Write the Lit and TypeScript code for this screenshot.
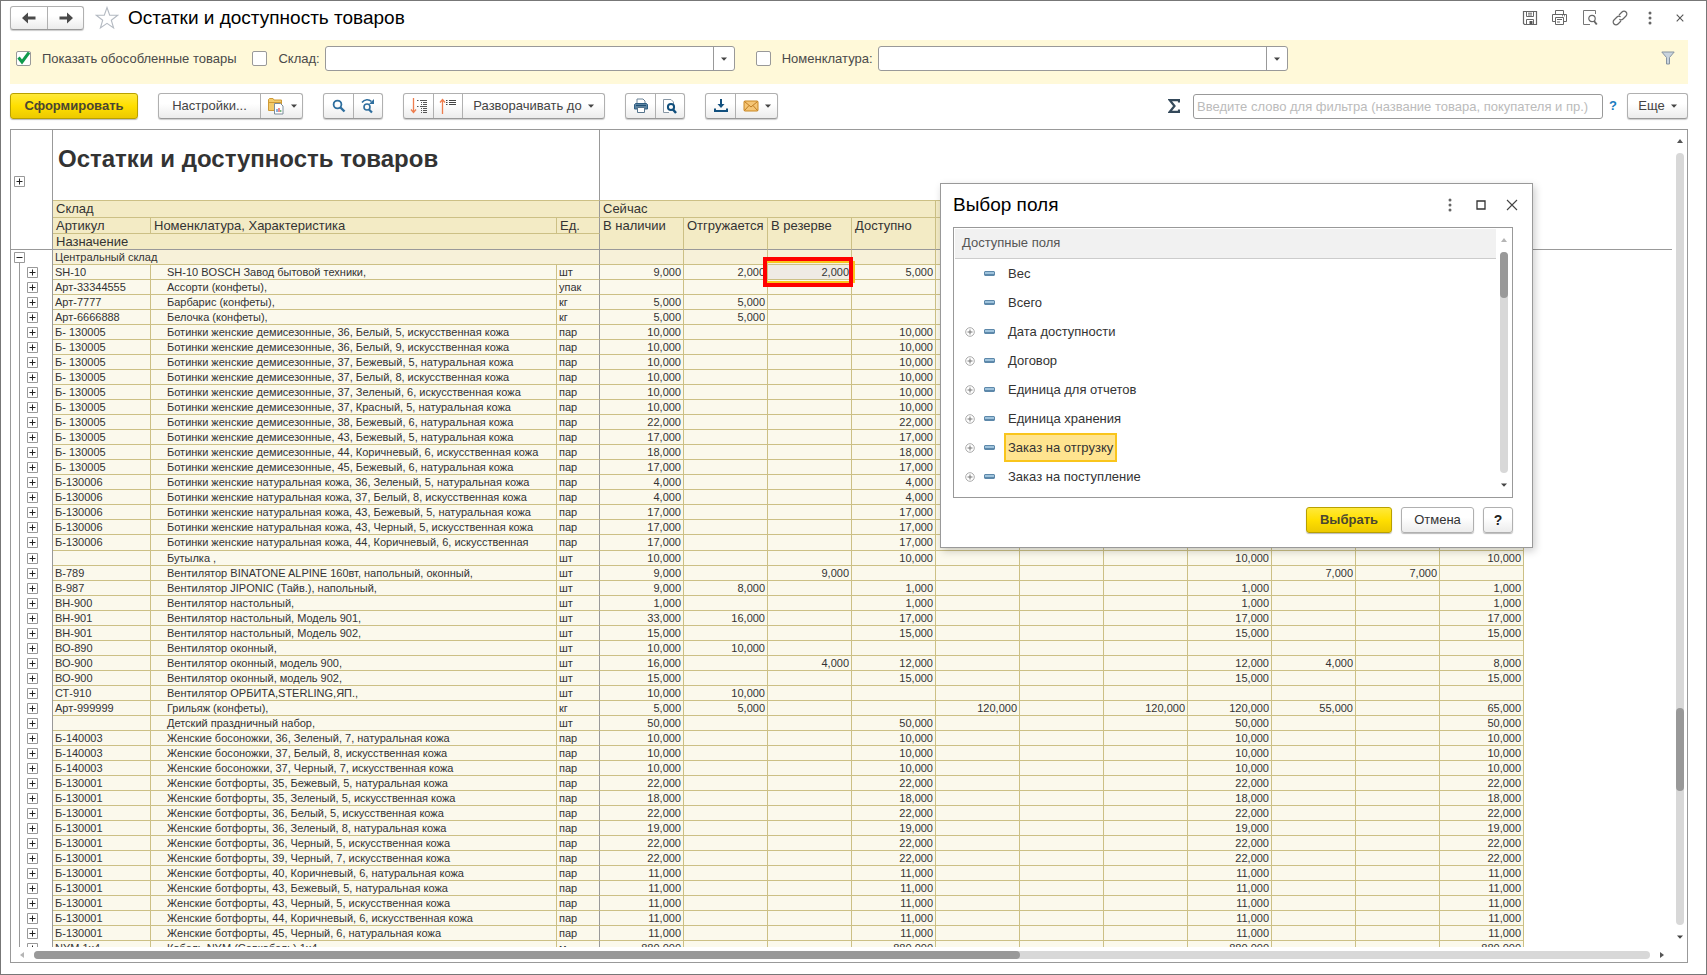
import { LitElement, html, svg, css } from "lit";
import { customElement } from "lit/decorators.js";
import { classMap } from "lit/directives/class-map.js";

type Row = { code: string; name: string; unit: string; v: string[]; tall?: boolean };

// Values are listed per column; a lone number means it is in stock and fully available.
const full = (n: string) => [n, "", "", n, "", "", "", n, "", "", n];
const r = (code: string, name: string, unit: string, v: string | string[], tall = false): Row => ({
  code, name, unit, v: typeof v === "string" ? full(v) : v, tall,
});
const D = "Ботинки женские демисезонные, ";
const N = "Ботинки женские натуральная кожа, ";
const F = "Женские ботфорты, ";
const IK = ", искусственная кожа";
const NK = ", натуральная кожа";

const ROWS: Row[] = [
  r("SH-10", "SH-10 BOSCH Завод бытовой техники,", "шт", ["9,000", "2,000", "2,000", "5,000", "", "", "", "5,000", "", "", "5,000"]),
  r("Арт-33344555", "Ассорти (конфеты),", "упак", []),
  r("Арт-7777", "Барбарис (конфеты),", "кг", ["5,000", "5,000"]),
  r("Арт-6666888", "Белочка (конфеты),", "кг", ["5,000", "5,000"]),
  r("Б- 130005", D + "36, Белый, 5" + IK, "пар", "10,000"),
  r("Б- 130005", D + "36, Белый, 9" + IK, "пар", "10,000"),
  r("Б- 130005", D + "37, Бежевый, 5" + NK, "пар", "10,000"),
  r("Б- 130005", D + "37, Белый, 8" + IK, "пар", "10,000"),
  r("Б- 130005", D + "37, Зеленый, 6" + IK, "пар", "10,000"),
  r("Б- 130005", D + "37, Красный, 5" + NK, "пар", "10,000"),
  r("Б- 130005", D + "38, Бежевый, 6" + NK, "пар", "22,000"),
  r("Б- 130005", D + "43, Бежевый, 5" + NK, "пар", "17,000"),
  r("Б- 130005", D + "44, Коричневый, 6" + IK, "пар", "18,000"),
  r("Б- 130005", D + "45, Бежевый, 6" + NK, "пар", "17,000"),
  r("Б-130006", N + "36, Зеленый, 5" + NK, "пар", "4,000"),
  r("Б-130006", N + "37, Белый, 8" + IK, "пар", "4,000"),
  r("Б-130006", N + "43, Бежевый, 5" + NK, "пар", "17,000"),
  r("Б-130006", N + "43, Черный, 5" + IK, "пар", "17,000"),
  r("Б-130006", N + "44, Коричневый, 6, искусственная", "пар", "17,000", true),
  r("", "Бутылка ,", "шт", "10,000"),
  r("В-789", "Вентилятор BINATONE ALPINE 160вт, напольный, оконный,", "шт", ["9,000", "", "9,000", "", "", "", "", "", "7,000", "7,000"]),
  r("В-987", "Вентилятор JIPONIC (Тайв.), напольный,", "шт", ["9,000", "8,000", "", "1,000", "", "", "", "1,000", "", "", "1,000"]),
  r("ВН-900", "Вентилятор настольный,", "шт", "1,000"),
  r("ВН-901", "Вентилятор настольный, Модель 901,", "шт", ["33,000", "16,000", "", "17,000", "", "", "", "17,000", "", "", "17,000"]),
  r("ВН-901", "Вентилятор настольный, Модель 902,", "шт", "15,000"),
  r("ВО-890", "Вентилятор оконный,", "шт", ["10,000", "10,000"]),
  r("ВО-900", "Вентилятор оконный, модель 900,", "шт", ["16,000", "", "4,000", "12,000", "", "", "", "12,000", "4,000", "", "8,000"]),
  r("ВО-900", "Вентилятор оконный, модель 902,", "шт", "15,000"),
  r("СТ-910", "Вентилятор ОРБИТА,STERLING,ЯП.,", "шт", ["10,000", "10,000"]),
  r("Арт-999999", "Грильяж (конфеты),", "кг", ["5,000", "5,000", "", "", "120,000", "", "120,000", "120,000", "55,000", "", "65,000"]),
  r("", "Детский праздничный набор,", "шт", "50,000"),
  r("Б-140003", "Женские босоножки, 36, Зеленый, 7" + NK, "пар", "10,000"),
  r("Б-140003", "Женские босоножки, 37, Белый, 8" + IK, "пар", "10,000"),
  r("Б-140003", "Женские босоножки, 37, Черный, 7" + IK, "пар", "10,000"),
  r("Б-130001", F + "35, Бежевый, 5" + NK, "пар", "22,000"),
  r("Б-130001", F + "35, Зеленый, 5" + IK, "пар", "18,000"),
  r("Б-130001", F + "36, Белый, 5" + IK, "пар", "22,000"),
  r("Б-130001", F + "36, Зеленый, 8" + NK, "пар", "19,000"),
  r("Б-130001", F + "36, Черный, 5" + IK, "пар", "22,000"),
  r("Б-130001", F + "39, Черный, 7" + IK, "пар", "22,000"),
  r("Б-130001", F + "40, Коричневый, 6" + NK, "пар", "11,000"),
  r("Б-130001", F + "43, Бежевый, 5" + NK, "пар", "11,000"),
  r("Б-130001", F + "43, Черный, 5" + IK, "пар", "11,000"),
  r("Б-130001", F + "44, Коричневый, 6" + IK, "пар", "11,000"),
  r("Б-130001", F + "45, Черный, 6" + NK, "пар", "11,000"),
  r("NYM 1x4", "Кабель NYM (Севкабель) 1x4", "м", "880,000"),
];

const FIELDS: [string, boolean][] = [
  ["Вес", false], ["Всего", false], ["Дата доступности", true], ["Договор", true],
  ["Единица для отчетов", true], ["Единица хранения", true], ["Заказ на отгрузку", true], ["Заказ на поступление", true],
];

const COLS = [0, 1, 2, 3, 4, 5, 6, 7, 8, 9, 10];

const icon = (w: number, h: number, body: unknown) =>
  html`<svg width=${w} height=${h} viewBox="0 0 ${w} ${h}" fill="none" aria-hidden="true">${body}</svg>`;

const I = {
  back: icon(16, 14, svg`<path d="M1 7l6-5.500v4h7.500v3H7v4z" fill="#4a4a4a"/>`),
  fwd: icon(16, 14, svg`<path d="M15 7L9 1.500v4H1.500v3H9v4z" fill="#4a4a4a"/>`),
  star: icon(24, 24, svg`<path d="M12 1.500l2.700 7.600 8 .2-6.400 4.900 2.300 7.800-6.600-4.600L5.400 22l2.300-7.800L1.300 9.300l8-.2z" stroke="#b4bac2" stroke-width="1.100" fill="#fff"/>`),
  save: icon(16, 16, svg`<path d="M1.500 1.500h13v13h-12l-1-1z" stroke="#666" stroke-width="1.200"/><path d="M4.500 1.500v5h7v-5M6 3.200h4M6 5h4M4.500 14v-4.500h7V14" stroke="#666"/><path d="M7.500 11h3v3h-3z" fill="#555"/>`),
  print: icon(18, 16, svg`<path d="M4.500 4.500v-4h8v4M4.500 11.500h-3v-7h14v7h-3M4.500 7.500h8v7h-8zM6 9.500h5M6 12h3M11 5.800h1M13 5.800h1" stroke="#666"/>`),
  preview: icon(16, 16, svg`<path d="M8 14.500H1.500V.5h12V4" stroke="#777"/><circle cx="10" cy="8.500" r="3.200" stroke="#666" stroke-width="1.200"/><path d="M12 11l2.800 3.500" stroke="#666" stroke-width="2"/>`),
  link: icon(16, 16, svg`<path d="M7 5l3-3a2.700 2.700 0 014 4l-3 3a2.700 2.700 0 01-3.600.2M9 11l-3 3a2.700 2.700 0 01-4-4l3-3a2.700 2.700 0 013.600-.2" stroke="#666" stroke-width="1.200"/>`),
  dots: icon(4, 14, svg`<circle cx="2" cy="2" r="1.500" fill="#666"/><circle cx="2" cy="7" r="1.500" fill="#666"/><circle cx="2" cy="12" r="1.500" fill="#666"/>`),
  close: icon(8, 8, svg`<path d="M.7.7l6.600 6.600M7.300.7L.7 7.300" stroke="#555" stroke-width="1.100"/>`),
  closeBig: icon(12, 12, svg`<path d="M1 1l10 10M11 1L1 11" stroke="#444" stroke-width="1.100"/>`),
  max: icon(10, 10, svg`<path d="M1 1h8v8H1z" stroke="#333" stroke-width="1.300"/>`),
  caret: icon(6, 4, svg`<path d="M0 .5h6L3 3.800z" fill="#444"/>`),
  up: icon(6, 4, svg`<path d="M0 4h6L3 0z" fill="#555"/>`),
  upDim: icon(6, 4, svg`<path d="M0 4h6L3 0z" fill="#b5b5b5"/>`),
  left: icon(4, 6, svg`<path d="M4 0v6L0 3z" fill="#b5b5b5"/>`),
  right: icon(4, 6, svg`<path d="M0 0v6l4-3z" fill="#555"/>`),
  funnel: icon(14, 14, svg`<path d="M.8 1h12.400L8.500 6.500V13h-3V6.500z" fill="#c9d4de" stroke="#8794a0"/>`),
  folder: icon(18, 18, svg`<path d="M1.500 13.500v-11l1-1H6l1 1.500h7.500v10.500z" fill="#f3cb6b" stroke="#cf9a35"/><path d="M2 5.500h12" stroke="#cf9a35"/><path d="M7.500 6.500h6l2.500 2.500v8H7.500z" fill="#fff" stroke="#7c8c9b"/><path d="M10 15v-3" stroke="#3b7dc4" stroke-width="1.200"/><path d="M12 15v-4" stroke="#d44" stroke-width="1.200"/><path d="M13.800 15v-2" stroke="#3a9b4a"/>`),
  find: icon(14, 14, svg`<circle cx="5.500" cy="5.500" r="3.900" stroke="#2e6e9e" stroke-width="1.800"/><path d="M8.500 8.500l4 4" stroke="#2e6e9e" stroke-width="2.400"/>`),
  findNext: icon(16, 16, svg`<circle cx="7" cy="9" r="3" stroke="#2e6e9e" stroke-width="1.600"/><path d="M9 11.500l3 3" stroke="#2e6e9e" stroke-width="2.200"/><path d="M2 4.500C4.500 1 9 1 11.500 3.500" stroke="#2e6e9e" stroke-width="1.600"/><path d="M9 6h5V1z" fill="#2e6e9e"/>`),
  sortDown: icon(18, 16, svg`<path d="M3.500 0v14M1 11.500l2.500 3 2.500-3" stroke="#ee7d4e" stroke-width="1.300"/><path d="M7 2.500h1.500M10 2.500h7M11 4.500h1M13 4.500h4M11 6.500h1M13 6.500h4M7 8.500h1.500M10 8.500h7M11 10.500h1M13 10.500h4M11 12.500h1M13 12.500h4M11 14.500h1M13 14.500h4" stroke="#555"/>`),
  sortUp: icon(18, 16, svg`<path d="M3.500 16V1.500M1 4.500l2.500-3 2.500 3" stroke="#ee7d4e" stroke-width="1.300"/><path d="M7 2.500h1.500M7 4.500h1.500M7 6.500h1.500M10 2.500h7M10 4.500h7M10 6.500h7" stroke="#444"/>`),
  printBlue: icon(16, 16, svg`<path d="M4 5V1h6l2 2v2" fill="#fff" stroke="#6a8296"/><path d="M2.500 5.500h11l1 1V11h-13V6.500z" fill="#5c83a1" stroke="#2f5f84"/><path d="M3 7.500h10" stroke="#1f4f74"/><path d="M4.500 9.500h7v5h-7z" fill="#fff" stroke="#56748c"/>`),
  previewBlue: icon(16, 16, svg`<path d="M7 14.500H1.500v-13H9L11.500 4v2" stroke="#8797a5" fill="#fff"/><circle cx="9" cy="9" r="3.100" stroke="#0f4e7c" stroke-width="2"/><path d="M11 11.500l3 3.500" stroke="#0f4e7c" stroke-width="2.500"/>`),
  download: icon(16, 16, svg`<path d="M8 1v6" stroke="#12507e" stroke-width="2"/><path d="M4.500 6h7L8 10z" fill="#12507e"/><path d="M2 10.500v2.500h12v-2.500" stroke="#12507e" stroke-width="2"/>`),
  mail: icon(16, 12, svg`<rect x="1" y="1" width="14" height="10" rx="1" fill="#f5c575" stroke="#c98722"/><path d="M1.500 1.500L8 7l6.500-5.500M1.500 10.500l4.500-5M14.500 10.500l-4.500-5" stroke="#b8741a" stroke-width=".9"/>`),
  sigma: icon(12, 14, svg`<path d="M11 3.500V1.200H1.800L6.500 7l-4.700 5.800H11v-2.300" stroke="#34495a" stroke-width="2.200"/>`),
  field: icon(11, 5, svg`<path d="M1 0h9l1 1v3l-1 1H1L0 4V1z" fill="#5d88aa"/><path d="M1 1h9v2H1z" fill="#9fc3dc"/>`),
  expand: icon(10, 10, svg`<circle cx="5" cy="5" r="4.300" stroke="#aaa" fill="#fff"/><path d="M5 2.500v5M2.500 5h5" stroke="#777"/>`),
  plus: icon(11, 11, svg`<path d="M.5.5h10v10H.5z" fill="#fff" stroke="#999"/><path d="M5.500 2.500v6M2.500 5.500h6" stroke="#222"/>`),
  minus: icon(11, 11, svg`<path d="M.5.5h10v10H.5z" fill="#fff" stroke="#999"/><path d="M2.500 5.500h6" stroke="#222"/>`),
};

@customElement("app-root")
export class AppRoot extends LitElement {
  static styles = css`
    :host {
      display: block;
      position: relative;
      height: 100vh;
      box-sizing: border-box;
      border: 1px solid #777;
      background: #fff;
      color: #333;
      font: 13px/16px "Liberation Sans", Arial, sans-serif;
      overflow: hidden;
    }
    *, *::before, *::after { box-sizing: border-box; }
    svg { display: block; flex: none; }
    button { font: inherit; color: inherit; margin: 0; padding: 0; border: 0; background: none; }
    .page { display: flex; flex-direction: column; height: 100%; padding: 0 18px 11px 9px; }
    .titlebar { display: flex; align-items: center; height: 39px; padding-bottom: 6px; flex: none; }
    .group { display: flex; border: 1px solid #b0b0b0; border-bottom-color: #999; border-radius: 3px; background: linear-gradient(#fff 40%, #ececec); box-shadow: 0 1px 1px #ccc; height: 26px; }
    .group.nav { height: 24px; }
    .group button { display: flex; align-items: center; justify-content: center; width: 29px; gap: 6px; }
    .group button + button { border-left: 1px solid #b0b0b0; }
    .group.nav button { width: 36px; }
    .group .settings { width: 101px; }
    .group .level { width: 142px; }
    .group .more { width: 59px; }
    .group .drop { width: 42px; }
    .star { margin: 0 9px 0 11px; }
    h1, h2 { margin: 0; font-size: 19px; line-height: 22px; font-weight: 400; color: #000; }
    .grow { flex: 1; }
    .tools { display: flex; align-items: center; }
    .tools button { display: flex; align-items: center; justify-content: center; width: 30px; height: 24px; }
    .titlebar .tools { margin-right: -7px; }
    .filters { display: flex; align-items: flex-start; height: 44px; padding: 6px 13px 0 6px; background: #fff9d9; flex: none; color: #4a4a4a; }
    .check { display: flex; align-items: center; height: 25px; gap: 11px; }
    .check input { appearance: none; width: 15px; height: 15px; margin: 0; border: 1px solid #999; border-radius: 2px; background: #fff; }
    .check input:checked { background: #fff url("data:image/svg+xml,%3Csvg xmlns='http://www.w3.org/2000/svg' viewBox='0 0 13 13'%3E%3Cpath d='M1.500 5.500l3.500 4.500L12 .5' fill='none' stroke='%23109a4c' stroke-width='3'/%3E%3C/svg%3E") center / 13px; }
    .check.second { margin-left: 16px; }
    .check.third { margin-left: 21px; }
    .combo { display: flex; width: 410px; height: 25px; margin-left: 5px; border: 1px solid #999; border-radius: 3px; background: #fff; }
    .combo input { flex: 1; min-width: 0; border: 0; padding: 0 4px; background: none; font: inherit; outline: 0; }
    .combo button { width: 21px; border-left: 1px solid #999; display: flex; align-items: center; justify-content: center; }
    .funnel { padding-top: 5px; }
    .toolbar { display: flex; align-items: center; height: 45px; padding-top: 1px; padding-bottom: 2px; gap: 20px; flex: none; color: #444; }
    .primary { height: 26px; border: 1px solid #b8a000; border-radius: 3px; background: linear-gradient(#ffe93a, #ffdf00 50%, #ecc900); color: #4a4632; font-weight: 700; box-shadow: 0 1px 1px #bbb; }
    .make { width: 128px; }
    .right { display: flex; align-items: center; }
    .search { width: 410px; height: 25px; margin: 0 6px 0 13px; padding: 0 3px; border: 1px solid #999; border-radius: 3px; font: inherit; background: #fff; }
    .search::placeholder { color: #bbb; opacity: 1; }
    .help { color: #1a7cc0; font-weight: 700; text-decoration: none; margin-right: 10px; }
    .sheet { flex: 1; min-height: 0; display: grid; grid-template: minmax(0, 1fr) 15px / minmax(0, 1fr) 15px; border: 1px solid #999; }
    .view { overflow: hidden; }
    .vbar { display: flex; flex-direction: column; align-items: center; padding: 9px 0 8px; gap: 10px; }
    .vbar .track, .hbar .track { flex: 1; background: #d8d8d8; border-radius: 4px; display: flex; }
    .vbar .track { width: 8px; flex-direction: column; }
    .thumb { background: #999; border-radius: 4px; }
    .vbar .thumb { height: 83px; margin-top: 555px; }
    .hbar { display: flex; align-items: center; padding: 0 8px 0 9px; gap: 10px; }
    .hbar .track { height: 8px; }
    .hbar .thumb { width: 61%; }
    table { border-collapse: separate; border-spacing: 0; table-layout: fixed; width: 100%; font-size: 11px; line-height: 14px; }
    th, td { padding: 0 2px; font-weight: 400; text-align: left; white-space: nowrap; overflow: hidden; border: 0 solid #ccc085; border-width: 0 1px 1px 0; vertical-align: top; height: 15px; }
    td { background: #fbf9ec; }
    td.num { text-align: right; }
    td.name { padding-left: 16px; }
    .side, td.side { background: #fff; border-right-color: #999; }
    td.side { border-bottom: 0; padding: 2px 0 0 16px; background: linear-gradient(#999, #999) 8px 0 / 1px 100% no-repeat #fff; }
    td.side.root { padding-left: 3px; background: linear-gradient(#999, #999) 8px 8px / 1px 100% no-repeat #fff; }
    th.side { padding: 46px 0 0 3px; border-bottom-color: #999; vertical-align: top; }
    .side button { display: block; }
    .freeze, td.freeze { border-right-color: #999; }
    th.title { height: 71px; padding: 14px 5px 0; font-size: 24px; line-height: 30px; font-weight: 700; border-right-color: #999; }
    th.blank { border-right: 0; }
    .head th { background: #f3ebc5; font-size: 13px; line-height: 14px; height: 16px; padding: 1px 0 0 3px; }
    .head.first th { height: 17px; }
    th.low { border-bottom-color: #999 !important; }
    .head th.rest, th.rest, td.rest { background: #fff; border: 0; }
    .head th.rest.line { border-bottom: 1px solid #999; }
    .total td:not(.side):not(.rest) { background: #f7f1d9; }
    .tall td { height: 16px; }
    td.mark { position: relative; overflow: visible; background: #efebe4; }
    td.mark::before { content: ""; position: absolute; inset: -4px -4px -4px -1px; border: 2px solid #f9c51c; border-left: 0; }
    td.mark::after { content: ""; position: absolute; inset: -8px -2px -8px -5px; border: 4px solid #f00; }
    .dialog { position: absolute; left: 939px; top: 182px; width: 593px; border: 1px solid #999; background: #fff; box-shadow: 2px 3px 8px rgba(0, 0, 0, .2); padding: 0 19px 14px 12px; }
    .dialog header { display: flex; align-items: center; height: 43px; padding-bottom: 2px; }
    .dialog .tools { gap: 1px; margin-right: -14px; }
    .list { display: flex; height: 271px; border: 1px solid #999; padding: 1px; }
    .fields { flex: 1; overflow: hidden; }
    .cap { height: 30px; padding: 6px 7px; background: #f1f1f1; color: #555; border-bottom: 1px solid #ccc; }
    ul { list-style: none; margin: 0; padding: 0; }
    li { display: flex; align-items: center; height: 29px; padding-left: 10px; gap: 9px; }
    li .slot { width: 10px; }
    li .label { height: 29px; line-height: 25px; padding: 0 2px; border: 2px solid transparent; }
    li .label.on { background: #ffe48f; border-color: #f9c51c; }
    .list .vbar { width: 15px; padding: 9px 0; }
    .list .vbar .thumb { height: 46px; margin: 0; }
    .actions { display: flex; justify-content: flex-end; gap: 9px; margin-top: 9px; }
    .ok { width: 86px; }
    .plain { height: 26px; border: 1px solid #b0b0b0; border-radius: 3px; background: linear-gradient(#fff 40%, #ececec); box-shadow: 0 1px 1px #bbb; }
    .cancel { width: 73px; }
    .q { width: 30px; font-weight: 700; font-size: 14px; color: #222; }
  `;

  private row(d: Row, i: number) {
    return html`<tr class=${classMap({ tall: !!d.tall })}>
      <td class="side"><button aria-label="Развернуть">${I.plus}</button></td>
      <td>${d.code}</td><td class="name">${d.name}</td><td class="freeze">${d.unit}</td>
      ${COLS.map((c) => html`<td class=${classMap({ num: true, mark: i === 0 && c === 2 })}>${d.v[c] ?? ""}</td>`)}
      <td class="rest"></td>
    </tr>`;
  }

  render() {
    return html`
      <div class="page">
        <div class="titlebar">
          <div class="group nav"><button aria-label="Назад">${I.back}</button><button aria-label="Вперед">${I.fwd}</button></div>
          <button class="star" aria-label="В избранное">${I.star}</button>
          <h1>Остатки и доступность товаров</h1>
          <span class="grow"></span>
          <div class="tools">
            <button aria-label="Сохранить">${I.save}</button><button aria-label="Печать">${I.print}</button>
            <button aria-label="Просмотр">${I.preview}</button><button aria-label="Ссылка">${I.link}</button>
            <button aria-label="Меню">${I.dots}</button><button aria-label="Закрыть">${I.close}</button>
          </div>
        </div>
        <div class="filters">
          <label class="check"><input type="checkbox" checked />Показать обособленные товары</label>
          <label class="check second"><input type="checkbox" />Склад:</label>
          <div class="combo"><input type="text" aria-label="Склад" /><button aria-label="Выбрать склад">${I.caret}</button></div>
          <label class="check third"><input type="checkbox" />Номенклатура:</label>
          <div class="combo"><input type="text" aria-label="Номенклатура" /><button aria-label="Выбрать номенклатуру">${I.caret}</button></div>
          <span class="grow"></span>
          <button class="funnel" aria-label="Отбор">${I.funnel}</button>
        </div>
        <div class="toolbar">
          <button class="primary make">Сформировать</button>
          <div class="group"><button class="settings">Настройки...</button><button class="drop" aria-label="Варианты">${I.folder}${I.caret}</button></div>
          <div class="group"><button aria-label="Найти">${I.find}</button><button aria-label="Найти далее">${I.findNext}</button></div>
          <div class="group"><button aria-label="Развернуть группы">${I.sortDown}</button><button aria-label="Свернуть группы">${I.sortUp}</button><button class="level">Разворачивать до ${I.caret}</button></div>
          <div class="group"><button aria-label="Печать">${I.printBlue}</button><button aria-label="Предварительный просмотр">${I.previewBlue}</button></div>
          <div class="group"><button aria-label="Сохранить в файл">${I.download}</button><button class="drop" aria-label="Отправить">${I.mail}${I.caret}</button></div>
          <span class="grow"></span>
          <div class="right">
            <button aria-label="Сумма">${I.sigma}</button>
            <input class="search" type="text" aria-label="Фильтр" placeholder="Введите слово для фильтра (название товара, покупателя и пр.)" />
            <a class="help" href="#">?</a>
            <div class="group"><button class="more">Еще ${I.caret}</button></div>
          </div>
        </div>
        <div class="sheet">
          <div class="view">
            <table>
              <colgroup>
                <col style="width:42px" /><col style="width:98px" /><col style="width:406px" /><col style="width:43px" />
                ${COLS.map(() => html`<col style="width:84px" />`)}<col />
              </colgroup>
              <thead>
                <tr>
                  <th class="side" rowspan="4"><button aria-label="Развернуть">${I.plus}</button></th>
                  <th class="title" colspan="3">Остатки и доступность товаров</th>
                  <th class="blank" colspan="11"></th><th class="rest"></th>
                </tr>
                <tr class="head first">
                  <th class="freeze" colspan="3">Склад</th><th colspan="4">Сейчас</th><th colspan="7"></th><th class="rest"></th>
                </tr>
                <tr class="head">
                  <th>Артикул</th><th>Номенклатура, Характеристика</th><th class="freeze">Ед.</th>
                  <th class="low" rowspan="2">В наличии</th><th class="low" rowspan="2">Отгружается</th>
                  <th class="low" rowspan="2">В резерве</th><th class="low" rowspan="2">Доступно</th>
                  ${COLS.slice(4).map(() => html`<th class="low" rowspan="2"></th>`)}<th class="rest"></th>
                </tr>
                <tr class="head"><th class="low freeze" colspan="3">Назначение</th><th class="rest line"></th></tr>
              </thead>
              <tbody>
                <tr class="total">
                  <td class="side root"><button aria-label="Свернуть">${I.minus}</button></td>
                  <td class="freeze" colspan="3">Центральный склад</td>${COLS.map(() => html`<td></td>`)}<td class="rest"></td>
                </tr>
                ${ROWS.map((d, i) => this.row(d, i))}
              </tbody>
            </table>
          </div>
          <div class="vbar">${I.up}<div class="track"><div class="thumb"></div></div>${I.caret}</div>
          <div class="hbar">${I.left}<div class="track"><div class="thumb"></div></div>${I.right}</div>
        </div>
      </div>
      <section class="dialog" role="dialog" aria-labelledby="dlg">
        <header>
          <h2 id="dlg">Выбор поля</h2><span class="grow"></span>
          <div class="tools"><button aria-label="Меню">${I.dots}</button><button aria-label="Развернуть окно">${I.max}</button><button aria-label="Закрыть">${I.closeBig}</button></div>
        </header>
        <div class="list">
          <div class="fields">
            <div class="cap">Доступные поля</div>
            <ul>
              ${FIELDS.map(([name, open], i) => html`<li><span class="slot">${open ? I.expand : ""}</span>${I.field}<span class=${classMap({ label: true, on: i === 6 })}>${name}</span></li>`)}
            </ul>
          </div>
          <div class="vbar">${I.upDim}<div class="track"><div class="thumb"></div></div>${I.caret}</div>
        </div>
        <div class="actions">
          <button class="primary ok">Выбрать</button><button class="plain cancel">Отмена</button><button class="plain q" aria-label="Справка">?</button>
        </div>
      </section>
    `;
  }
}
